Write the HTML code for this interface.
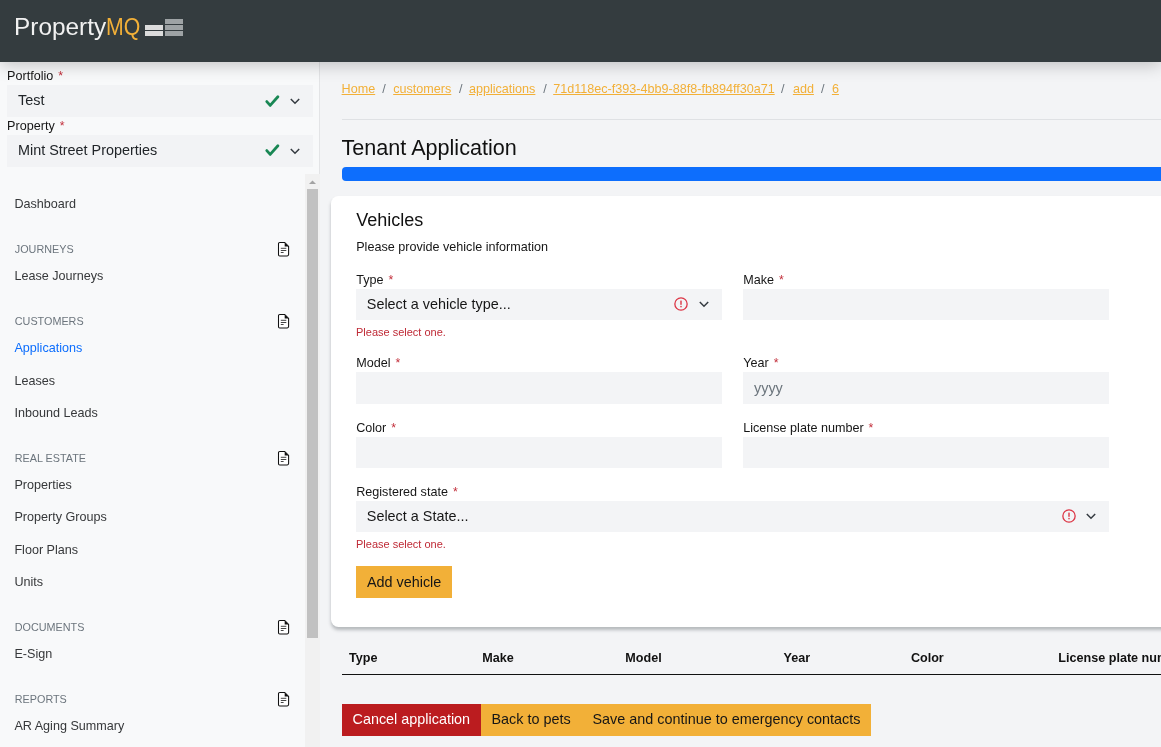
<!DOCTYPE html>
<html><head><meta charset="utf-8"><title>Tenant Application</title>
<style>
html,body{margin:0;padding:0;}
body{width:1161px;height:747px;overflow:hidden;position:relative;background:#f3f4f6;font-family:"Liberation Sans",sans-serif;}
.t{position:absolute;white-space:nowrap;}
.r{position:absolute;}
.ic{position:absolute;overflow:visible;}
.req{color:#c22e3a;margin-left:5px;font-size:12.3px;}
#main,#side,#head{position:absolute;left:0;top:0;width:1161px;height:747px;will-change:transform;}
#main{overflow:hidden;}
</style></head><body>
<div id="main">
<div class="t " style="left:341.60px;top:81.03px;font-size:12.6px;line-height:16px;color:#f2b038;font-weight:400;text-decoration:underline;text-underline-offset:1.1px;">Home</div>
<div class="t " style="left:393.20px;top:81.03px;font-size:12.6px;line-height:16px;color:#f2b038;font-weight:400;text-decoration:underline;text-underline-offset:1.1px;">customers</div>
<div class="t " style="left:468.90px;top:81.03px;font-size:12.6px;line-height:16px;color:#f2b038;font-weight:400;text-decoration:underline;text-underline-offset:1.1px;">applications</div>
<div class="t " style="left:553.20px;top:81.03px;font-size:12.6px;line-height:16px;color:#f2b038;font-weight:400;text-decoration:underline;text-underline-offset:1.1px;">71d118ec-f393-4bb9-88f8-fb894ff30a71</div>
<div class="t " style="left:792.90px;top:81.03px;font-size:12.6px;line-height:16px;color:#f2b038;font-weight:400;text-decoration:underline;text-underline-offset:1.1px;">add</div>
<div class="t " style="left:831.90px;top:81.03px;font-size:12.6px;line-height:16px;color:#f2b038;font-weight:400;text-decoration:underline;text-underline-offset:1.1px;">6</div>
<div class="t " style="left:382.20px;top:81.03px;font-size:12.6px;line-height:16px;color:#6c757d;font-weight:400;">/</div>
<div class="t " style="left:458.90px;top:81.03px;font-size:12.6px;line-height:16px;color:#6c757d;font-weight:400;">/</div>
<div class="t " style="left:543.20px;top:81.03px;font-size:12.6px;line-height:16px;color:#6c757d;font-weight:400;">/</div>
<div class="t " style="left:780.90px;top:81.03px;font-size:12.6px;line-height:16px;color:#6c757d;font-weight:400;">/</div>
<div class="t " style="left:820.90px;top:81.03px;font-size:12.6px;line-height:16px;color:#6c757d;font-weight:400;">/</div>
<div class="r" style="left:342px;top:119px;width:900px;height:1px;background:#dfe1e4;"></div>
<div class="t " style="left:341.50px;top:134.02px;font-size:21.6px;line-height:27px;color:#111;font-weight:400;">Tenant Application</div>
<div class="r" style="left:342px;top:167px;width:900px;height:14px;background:#0d6efd;border-radius:4px;"></div>
<div class="r" style="left:331px;top:196px;width:900px;height:431px;background:#fff;border-radius:7.5px;box-shadow:0 3px 3.5px rgba(40,50,56,0.3);"></div>
<div class="t " style="left:356.20px;top:208.76px;font-size:18px;line-height:22px;color:#111;font-weight:400;">Vehicles</div>
<div class="t " style="left:356.20px;top:238.63px;font-size:12.6px;line-height:16px;color:#161616;font-weight:400;">Please provide vehicle information</div>
<div class="t " style="left:356.20px;top:271.93px;font-size:12.6px;line-height:16px;color:#161616;font-weight:400;">Type<span class="req">*</span></div>
<div class="r" style="left:356px;top:289px;width:366px;height:31px;background:#f3f4f6;"></div>
<div class="t " style="left:366.80px;top:295.01px;font-size:14.4px;line-height:18px;color:#161616;font-weight:400;">Select a vehicle type...</div>
<svg class="ic" style="left:674.0500000000001px;top:297.05px" width="14" height="14" viewBox="0 0 14 14"><circle cx="7" cy="7" r="6.15" fill="none" stroke="#dc3545" stroke-width="1.3"/><rect x="6.3" y="3.6" width="1.4" height="4.2" fill="#dc3545"/><rect x="6.3" y="8.9" width="1.4" height="1.4" fill="#dc3545"/></svg>
<svg class="ic" style="left:699px;top:300.5px" width="10" height="7" viewBox="0 0 10 7"><path d="M0.8 1 L5 5.2 L9.2 1" fill="none" stroke="#343a40" stroke-width="1.5"/></svg>
<div class="t " style="left:356.00px;top:325.19px;font-size:11px;line-height:14px;color:#bf2a36;font-weight:400;">Please select one.</div>
<div class="t " style="left:743.20px;top:271.93px;font-size:12.6px;line-height:16px;color:#161616;font-weight:400;">Make<span class="req">*</span></div>
<div class="r" style="left:743px;top:289px;width:366px;height:31px;background:#f3f4f6;"></div>
<div class="t " style="left:356.20px;top:355.33px;font-size:12.6px;line-height:16px;color:#161616;font-weight:400;">Model<span class="req">*</span></div>
<div class="r" style="left:356px;top:372px;width:366px;height:32px;background:#f3f4f6;"></div>
<div class="t " style="left:743.20px;top:355.33px;font-size:12.6px;line-height:16px;color:#161616;font-weight:400;">Year<span class="req">*</span></div>
<div class="r" style="left:743px;top:372px;width:366px;height:32px;background:#f3f4f6;"></div>
<div class="t " style="left:754.00px;top:378.51px;font-size:14.4px;line-height:18px;color:#6c757d;font-weight:400;">yyyy</div>
<div class="t " style="left:356.20px;top:419.93px;font-size:12.6px;line-height:16px;color:#161616;font-weight:400;">Color<span class="req">*</span></div>
<div class="r" style="left:356px;top:437px;width:366px;height:31px;background:#f3f4f6;"></div>
<div class="t " style="left:743.20px;top:419.93px;font-size:12.6px;line-height:16px;color:#161616;font-weight:400;">License plate number<span class="req">*</span></div>
<div class="r" style="left:743px;top:437px;width:366px;height:31px;background:#f3f4f6;"></div>
<div class="t " style="left:356.20px;top:483.93px;font-size:12.6px;line-height:16px;color:#161616;font-weight:400;">Registered state<span class="req">*</span></div>
<div class="r" style="left:356px;top:501px;width:753px;height:31px;background:#f3f4f6;"></div>
<div class="t " style="left:366.80px;top:507.01px;font-size:14.4px;line-height:18px;color:#161616;font-weight:400;">Select a State...</div>
<svg class="ic" style="left:1061.85px;top:509.35px" width="14" height="14" viewBox="0 0 14 14"><circle cx="7" cy="7" r="6.15" fill="none" stroke="#dc3545" stroke-width="1.3"/><rect x="6.3" y="3.6" width="1.4" height="4.2" fill="#dc3545"/><rect x="6.3" y="8.9" width="1.4" height="1.4" fill="#dc3545"/></svg>
<svg class="ic" style="left:1086px;top:512.5px" width="10" height="7" viewBox="0 0 10 7"><path d="M0.8 1 L5 5.2 L9.2 1" fill="none" stroke="#343a40" stroke-width="1.5"/></svg>
<div class="t " style="left:356.00px;top:537.39px;font-size:11px;line-height:14px;color:#bf2a36;font-weight:400;">Please select one.</div>
<div class="r" style="left:356px;top:566px;width:96px;height:32px;background:#f2b038;"></div>
<div class="t " style="left:366.90px;top:573.01px;font-size:14.4px;line-height:18px;color:#161616;font-weight:400;">Add vehicle</div>
<div class="t " style="left:349.00px;top:649.93px;font-size:12.6px;line-height:16px;color:#111;font-weight:700;">Type</div>
<div class="t " style="left:482.30px;top:649.93px;font-size:12.6px;line-height:16px;color:#111;font-weight:700;">Make</div>
<div class="t " style="left:625.30px;top:649.93px;font-size:12.6px;line-height:16px;color:#111;font-weight:700;">Model</div>
<div class="t " style="left:783.50px;top:649.93px;font-size:12.6px;line-height:16px;color:#111;font-weight:700;">Year</div>
<div class="t " style="left:910.90px;top:649.93px;font-size:12.6px;line-height:16px;color:#111;font-weight:700;">Color</div>
<div class="t " style="left:1058.30px;top:649.93px;font-size:12.6px;line-height:16px;color:#111;font-weight:700;">License plate number</div>
<div class="r" style="left:342px;top:674px;width:900px;height:1px;background:#111;"></div>
<div class="r" style="left:342px;top:704px;width:139px;height:32px;background:#bb1c1f;"></div>
<div class="t " style="left:352.50px;top:710.21px;font-size:14.4px;line-height:18px;color:#fff;font-weight:400;">Cancel application</div>
<div class="r" style="left:481px;top:704px;width:390px;height:32px;background:#f2b038;"></div>
<div class="t " style="left:491.50px;top:710.21px;font-size:14.4px;line-height:18px;color:#161616;font-weight:400;">Back to pets</div>
<div class="t " style="left:592.50px;top:710.21px;font-size:14.4px;line-height:18px;color:#161616;font-weight:400;">Save and continue to emergency contacts</div>
</div>
<div id="side">
<div class="r" style="left:0px;top:62px;width:319px;height:685px;background:#f8f9fa;"></div>
<div class="r" style="left:319px;top:62px;width:1px;height:112px;background:#e3e4e6;"></div>
<div class="t " style="left:7.10px;top:67.83px;font-size:12.6px;line-height:16px;color:#161616;font-weight:400;">Portfolio<span class="req">*</span></div>
<div class="r" style="left:7px;top:85px;width:306px;height:32px;background:#f2f3f5;"></div>
<div class="t " style="left:18.00px;top:91.01px;font-size:14.4px;line-height:18px;color:#212529;font-weight:400;">Test</div>
<div class="t " style="left:7.10px;top:117.83px;font-size:12.6px;line-height:16px;color:#161616;font-weight:400;">Property<span class="req">*</span></div>
<div class="r" style="left:7px;top:135px;width:306px;height:32px;background:#f2f3f5;"></div>
<div class="t " style="left:18.00px;top:141.01px;font-size:14.4px;line-height:18px;color:#212529;font-weight:400;">Mint Street Properties</div>
<svg class="ic" style="left:264.5px;top:94.5px" width="15" height="13" viewBox="0 0 15 13"><path d="M1.8 6.6 L5.2 10.4 L12.9 1.8" fill="none" stroke="#198754" stroke-width="2.8" stroke-linecap="round" stroke-linejoin="round"/></svg>
<svg class="ic" style="left:289.7px;top:97.8px" width="10" height="7" viewBox="0 0 10 7"><path d="M0.8 1 L5 5.2 L9.2 1" fill="none" stroke="#343a40" stroke-width="1.5"/></svg>
<svg class="ic" style="left:264.5px;top:144.3px" width="15" height="13" viewBox="0 0 15 13"><path d="M1.8 6.6 L5.2 10.4 L12.9 1.8" fill="none" stroke="#198754" stroke-width="2.8" stroke-linecap="round" stroke-linejoin="round"/></svg>
<svg class="ic" style="left:289.7px;top:147.5px" width="10" height="7" viewBox="0 0 10 7"><path d="M0.8 1 L5 5.2 L9.2 1" fill="none" stroke="#343a40" stroke-width="1.5"/></svg>
<div class="t " style="left:14.40px;top:195.93px;font-size:12.6px;line-height:16px;color:#36383a;font-weight:400;">Dashboard</div>
<div class="t " style="left:14.80px;top:241.56px;font-size:10.8px;line-height:14px;color:#6c757d;font-weight:400;">JOURNEYS</div>
<svg class="ic" style="left:278px;top:241.60000000000002px" width="12" height="15" viewBox="0 0 12 15"><path d="M0.5 1.8 Q0.5 0.5 1.8 0.5 H6.8 L10.6 4.3 V12.6 Q10.6 13.9 9.3 13.9 H1.8 Q0.5 13.9 0.5 12.6 Z" fill="#fff" stroke="#111" stroke-width="1.05" stroke-linejoin="round"/><path d="M6.7 0.6 V4.4 H10.5 Z" fill="#111"/><path d="M2.8 6.3 H8.3 M2.8 8.5 H8.3 M2.8 10.5 H5.6" stroke="#222" stroke-width="0.85"/></svg>
<div class="t " style="left:14.40px;top:267.63px;font-size:12.6px;line-height:16px;color:#36383a;font-weight:400;">Lease Journeys</div>
<div class="t " style="left:14.80px;top:313.56px;font-size:10.8px;line-height:14px;color:#6c757d;font-weight:400;">CUSTOMERS</div>
<svg class="ic" style="left:278px;top:313.6px" width="12" height="15" viewBox="0 0 12 15"><path d="M0.5 1.8 Q0.5 0.5 1.8 0.5 H6.8 L10.6 4.3 V12.6 Q10.6 13.9 9.3 13.9 H1.8 Q0.5 13.9 0.5 12.6 Z" fill="#fff" stroke="#111" stroke-width="1.05" stroke-linejoin="round"/><path d="M6.7 0.6 V4.4 H10.5 Z" fill="#111"/><path d="M2.8 6.3 H8.3 M2.8 8.5 H8.3 M2.8 10.5 H5.6" stroke="#222" stroke-width="0.85"/></svg>
<div class="t " style="left:14.40px;top:339.93px;font-size:12.6px;line-height:16px;color:#0d6efd;font-weight:400;">Applications</div>
<div class="t " style="left:14.40px;top:372.63px;font-size:12.6px;line-height:16px;color:#36383a;font-weight:400;">Leases</div>
<div class="t " style="left:14.40px;top:405.03px;font-size:12.6px;line-height:16px;color:#36383a;font-weight:400;">Inbound Leads</div>
<div class="t " style="left:14.80px;top:450.96px;font-size:10.8px;line-height:14px;color:#6c757d;font-weight:400;">REAL ESTATE</div>
<svg class="ic" style="left:278px;top:451.0px" width="12" height="15" viewBox="0 0 12 15"><path d="M0.5 1.8 Q0.5 0.5 1.8 0.5 H6.8 L10.6 4.3 V12.6 Q10.6 13.9 9.3 13.9 H1.8 Q0.5 13.9 0.5 12.6 Z" fill="#fff" stroke="#111" stroke-width="1.05" stroke-linejoin="round"/><path d="M6.7 0.6 V4.4 H10.5 Z" fill="#111"/><path d="M2.8 6.3 H8.3 M2.8 8.5 H8.3 M2.8 10.5 H5.6" stroke="#222" stroke-width="0.85"/></svg>
<div class="t " style="left:14.40px;top:476.93px;font-size:12.6px;line-height:16px;color:#36383a;font-weight:400;">Properties</div>
<div class="t " style="left:14.40px;top:508.93px;font-size:12.6px;line-height:16px;color:#36383a;font-weight:400;">Property Groups</div>
<div class="t " style="left:14.40px;top:541.63px;font-size:12.6px;line-height:16px;color:#36383a;font-weight:400;">Floor Plans</div>
<div class="t " style="left:14.40px;top:573.63px;font-size:12.6px;line-height:16px;color:#36383a;font-weight:400;">Units</div>
<div class="t " style="left:14.80px;top:619.56px;font-size:10.8px;line-height:14px;color:#6c757d;font-weight:400;">DOCUMENTS</div>
<svg class="ic" style="left:278px;top:619.5999999999999px" width="12" height="15" viewBox="0 0 12 15"><path d="M0.5 1.8 Q0.5 0.5 1.8 0.5 H6.8 L10.6 4.3 V12.6 Q10.6 13.9 9.3 13.9 H1.8 Q0.5 13.9 0.5 12.6 Z" fill="#fff" stroke="#111" stroke-width="1.05" stroke-linejoin="round"/><path d="M6.7 0.6 V4.4 H10.5 Z" fill="#111"/><path d="M2.8 6.3 H8.3 M2.8 8.5 H8.3 M2.8 10.5 H5.6" stroke="#222" stroke-width="0.85"/></svg>
<div class="t " style="left:14.40px;top:645.93px;font-size:12.6px;line-height:16px;color:#36383a;font-weight:400;">E-Sign</div>
<div class="t " style="left:14.80px;top:691.56px;font-size:10.8px;line-height:14px;color:#6c757d;font-weight:400;">REPORTS</div>
<svg class="ic" style="left:278px;top:691.5999999999999px" width="12" height="15" viewBox="0 0 12 15"><path d="M0.5 1.8 Q0.5 0.5 1.8 0.5 H6.8 L10.6 4.3 V12.6 Q10.6 13.9 9.3 13.9 H1.8 Q0.5 13.9 0.5 12.6 Z" fill="#fff" stroke="#111" stroke-width="1.05" stroke-linejoin="round"/><path d="M6.7 0.6 V4.4 H10.5 Z" fill="#111"/><path d="M2.8 6.3 H8.3 M2.8 8.5 H8.3 M2.8 10.5 H5.6" stroke="#222" stroke-width="0.85"/></svg>
<div class="t " style="left:14.40px;top:717.63px;font-size:12.6px;line-height:16px;color:#36383a;font-weight:400;">AR Aging Summary</div>
<div class="r" style="left:305px;top:174px;width:15px;height:573px;background:#f1f1f1;"></div>
<div class="r" style="left:307px;top:189px;width:11px;height:449px;background:#c1c1c1;"></div>
<svg class="ic" style="left:305px;top:176.5px" width="15" height="10" viewBox="0 0 15 10"><path d="M4 7 L7.5 3.5 L11 7 Z" fill="#a3a3a3"/></svg>
</div>
<div id="head">
<div class="r" style="left:0px;top:0px;width:1161px;height:62px;background:#343c3f;box-shadow:0 3px 16px rgba(0,0,0,0.22);"></div>
<div class="t " style="left:13.80px;top:12.53px;font-size:23px;line-height:29px;color:#f1f1f1;font-weight:400;"><span style="display:inline-block;transform:scaleX(1.06);transform-origin:0 0;">Property</span></div>
<div class="t " style="left:106.20px;top:12.53px;font-size:23px;line-height:29px;color:#f2b038;font-weight:400;"><span style="display:inline-block;transform:scaleX(0.925);transform-origin:0 0;">MQ</span></div>
<div class="r" style="left:145px;top:25px;width:18.3px;height:4.5px;background:#dcdcdc;"></div>
<div class="r" style="left:145px;top:31px;width:18.3px;height:4.5px;background:#dcdcdc;"></div>
<div class="r" style="left:164.6px;top:19.2px;width:18.3px;height:4.5px;background:#9ea3a5;"></div>
<div class="r" style="left:164.6px;top:25px;width:18.3px;height:4.5px;background:#9ea3a5;"></div>
<div class="r" style="left:164.6px;top:31px;width:18.3px;height:4.5px;background:#9ea3a5;"></div>
</div>
</body></html>
